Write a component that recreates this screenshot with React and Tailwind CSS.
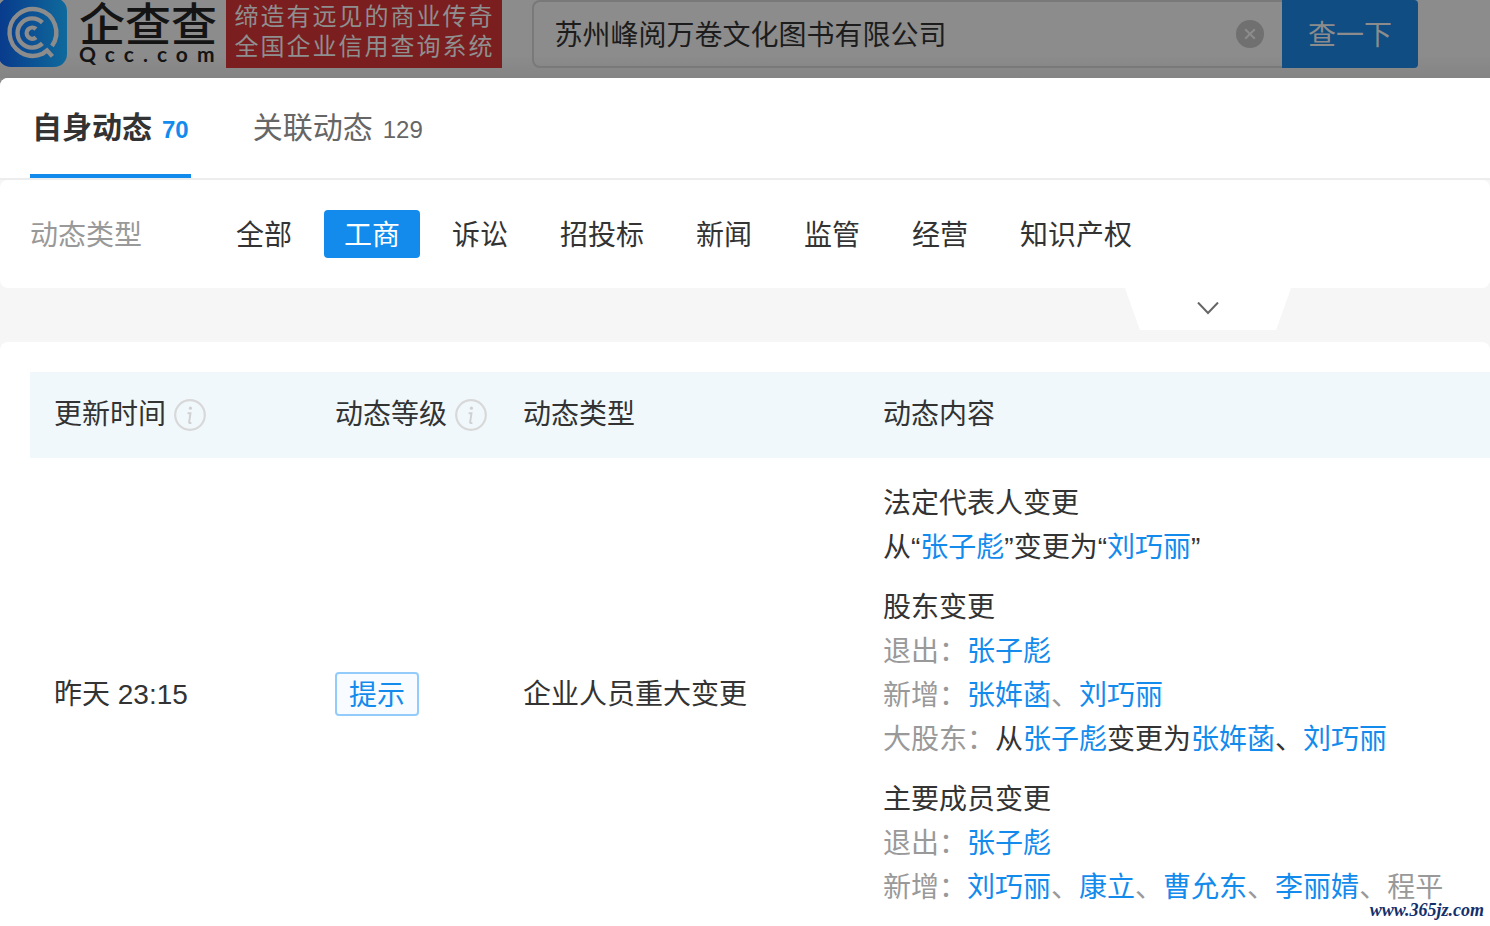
import { useState } from 'react'

const TABS = [
  { key: 'self', label: '自身动态', count: 70 },
  { key: 'related', label: '关联动态', count: 129 },
]

const TYPES = ['全部', '工商', '诉讼', '招投标', '新闻', '监管', '经营', '知识产权']

// ── Logo ──────────────────────────────────────────────────────
function Logo() {
  return (
    <a href="#" className="flex shrink-0 items-start gap-3 text-[#141414]">
      <svg viewBox="0 0 67 68" className="h-[68px] w-[67px]" fill="none" aria-hidden="true">
        <defs>
          <linearGradient id="logo-bg" x1="0" y1="0" x2="1" y2="0">
            <stop offset="0" stopColor="#083a8c" />
            <stop offset="1" stopColor="#0f6a9c" />
          </linearGradient>
        </defs>
        <rect x="-2" y="-2" width="69" height="69" rx="13" fill="url(#logo-bg)" />
        <g stroke="#8c8c8c" strokeWidth="4.4">
          <path d="M52 46A23.4 23.4 0 1 0 42.5 53.8L47 50.4L52.4 56.4" />
          <path d="M42.4 22.6A14.6 14.6 0 1 0 42.4 43.4" />
          <path d="M36 29A5.6 5.6 0 1 0 36 37.4" />
        </g>
      </svg>
      <span className="flex flex-col">
        <span className="h-[42px] font-['Noto_Sans_CJK_SC',sans-serif] text-[46px] leading-[42px] font-medium">企查查</span>
        <span className="font-['Lato',sans-serif] text-[21px] leading-6 font-bold tracking-[9px]">Qcc.com</span>
      </span>
    </a>
  )
}

function SearchBar() {
  const [query, setQuery] = useState('苏州峰阅万卷文化图书有限公司')
  return (
    <form className="ml-[30px] flex h-[68px] flex-1" onSubmit={e => e.preventDefault()}>
      <div className="flex flex-1 items-center rounded-l-lg border-2 border-r-0 border-[#797979] pr-[18px] pl-5">
        <input aria-label="企业名称" value={query} onChange={e => setQuery(e.target.value)}
          className="min-w-0 flex-1 bg-transparent pt-[3px] text-[28px] text-[#1c1c1c] outline-none" />
        <button type="button" aria-label="清除" onClick={() => setQuery('')}
          className="flex size-7 items-center justify-center rounded-full bg-[#707070]">
          <svg viewBox="0 0 12 12" className="size-3" stroke="#8c8c8c" strokeWidth="2" aria-hidden="true">
            <path d="M1.2 1.2l9.6 9.6M10.8 1.2l-9.6 9.6" />
          </svg>
        </button>
      </div>
      <button type="submit" className="w-[136px] rounded-r bg-[#0f4d83] pt-[3px] text-[28px] text-[#8c8c8c]">查一下</button>
    </form>
  )
}

// ── Small pieces ──────────────────────────────────────────────
function InfoIcon() {
  return (
    <svg viewBox="0 0 32 32" className="size-8 shrink-0" fill="none" aria-hidden="true">
      <circle cx="16" cy="16" r="14.8" stroke="#d8d8d8" strokeWidth="2.2" />
      <circle cx="16.4" cy="9.2" r="1.6" fill="#d0d0d0" />
      <path d="M13.6 14.2h2.9l-1.4 9.2c0 .8.7.8 2.3.4" stroke="#d0d0d0" strokeWidth="1.9" />
    </svg>
  )
}

function Name({ children }) {
  return <a href="#" className="text-[#128bed]">{children}</a>
}

function Names({ list }) {
  return list.map((n, i) => (
    <span key={n}>{i > 0 && '、'}<Name>{n}</Name></span>
  ))
}

function Block({ title, children }) {
  return (
    <div>
      <h3>{title}</h3>
      {children}
    </div>
  )
}

const Muted = ({ children }) => <span className="text-[#999]">{children}</span>

export default function App() {
  const [tab, setTab] = useState('self')
  const [type, setType] = useState('工商')

  return (
    <div className="relative flex h-screen flex-col overflow-hidden bg-[#8b8b8b] font-['Liberation_Sans','Noto_Sans_CJK_SC',sans-serif] text-[#333]">
      <header className="flex h-[78px] shrink-0 items-start bg-linear-to-b from-[#8c8c8c] from-70% to-[#848484] pr-[72px]">
        <Logo />
        <p className="ml-[3px] h-[68px] shrink-0 bg-[#7b1e1f] px-2 pt-[2px] text-2xl leading-[30px] tracking-[2px] text-[#8f8f8f]">
          缔造有远见的商业传奇<br />全国企业信用查询系统
        </p>
        <SearchBar />
      </header>

      <main className="flex-1 rounded-t-lg bg-[#f6f6f6]">
        {/* tabs */}
        <nav className="flex h-[102px] gap-[60px] rounded-tl-lg border-b-2 border-[#ededed] bg-white pl-[30px]">
          {TABS.map(t => (
            <button key={t.key} onClick={() => setTab(t.key)}
              className={`flex items-baseline gap-[10px] border-b-4 px-0.5 pt-7 text-[30px] leading-[44px] ${t.key === tab ? 'border-[#128bed] font-bold' : 'border-transparent text-[#666]'}`}>
              {t.label}
              <span className={`text-2xl ${t.key === tab ? 'text-[#128bed]' : ''}`}>{t.count}</span>
            </button>
          ))}
        </nav>

        {/* type filter */}
        <section className="flex items-center rounded-lg bg-white py-[30px] pl-[30px] text-[28px] leading-[44px]">
          <span className="w-[186px] pt-[3px] text-[#999]">动态类型</span>
          <div className="flex gap-3">
            {TYPES.map(t => (
              <button key={t} onClick={() => setType(t)}
                className={`h-12 rounded px-5 pt-[3px] ${t === type ? 'bg-[#128bed] text-white' : ''}`}>
                {t}
              </button>
            ))}
          </div>
        </section>
        <div className="flex h-[54px] justify-end pr-[199px]">
          <button aria-label="展开"
            className="flex h-[42px] w-[166px] items-center justify-center bg-white [clip-path:polygon(0_0,100%_0,91%_100%,9%_100%)]">
            <svg viewBox="0 0 22 14" className="h-[14px] w-[22px]" fill="none" stroke="#666" strokeWidth="2" aria-hidden="true">
              <path d="M1 0.5l10 10.5 10-10.5" />
            </svg>
          </button>
        </div>

        {/* records */}
        <section className="rounded-t-lg bg-white pt-[30px] pl-[30px]">
          <table className="w-full table-fixed text-left text-[28px] leading-[44px]">
            <colgroup>
              <col className="w-[281px]" />
              <col className="w-[188px]" />
              <col className="w-[360px]" />
              <col />
            </colgroup>
            <thead>
              <tr className="h-[86px] bg-[#f0f8fc]">
                <th className="pl-6 font-normal"><span className="flex items-center gap-2">更新时间<InfoIcon /></span></th>
                <th className="pl-6 font-normal"><span className="flex items-center gap-2">动态等级<InfoIcon /></span></th>
                <th className="pl-6 font-normal">动态类型</th>
                <th className="pl-6 font-normal">动态内容</th>
              </tr>
            </thead>
            <tbody>
              <tr>
                <td className="pt-[2px] pl-6">昨天 23:15</td>
                <td className="pl-6">
                  <span className="flex h-11 w-[84px] items-center justify-center rounded border-2 border-[#93ccfa] bg-[#f8fbff] pt-[3px] text-[#128bed]">提示</span>
                </td>
                <td className="pt-[2px] pl-6">企业人员重大变更</td>
                <td className="pt-6 pb-5 pl-6">
                  <div className="flex flex-col gap-4 whitespace-nowrap">
                    <Block title="法定代表人变更">
                      <p>从“<Name>张子彪</Name>”变更为“<Name>刘巧丽</Name>”</p>
                    </Block>
                    <Block title="股东变更">
                      <p><Muted>退出：</Muted><Name>张子彪</Name></p>
                      <p className="text-[#999]">新增：<Names list={['张姩菡', '刘巧丽']} /></p>
                      <p><Muted>大股东：</Muted>从<Name>张子彪</Name>变更为<Names list={['张姩菡', '刘巧丽']} /></p>
                    </Block>
                    <Block title="主要成员变更">
                      <p><Muted>退出：</Muted><Name>张子彪</Name></p>
                      <p className="text-[#999]">新增：<Names list={['刘巧丽', '康立', '曹允东', '李丽婧']} />、程平</p>
                    </Block>
                  </div>
                </td>
              </tr>
            </tbody>
          </table>
        </section>
      </main>

      <span className="absolute right-[6px] bottom-1 font-['Liberation_Serif',serif] text-lg leading-6 font-bold text-[#12306e] italic">www.365jz.com</span>
    </div>
  )
}
